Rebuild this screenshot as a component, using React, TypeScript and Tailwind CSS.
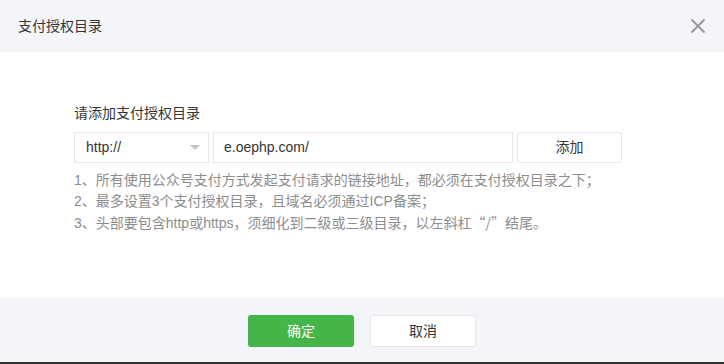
export default function App() {
  const notes = [
    '1、所有使用公众号支付方式发起支付请求的链接地址，都必须在支付授权目录之下；',
    '2、最多设置3个支付授权目录，且域名必须通过ICP备案；',
  ]
  return (
    <div className="w-[724px] h-[364px] flex flex-col bg-white text-[#353535] font-['Liberation_Sans','Noto_Sans_CJK_SC',sans-serif] [text-spacing-trim:space-all]">
      <div className="h-[52px] shrink-0 bg-[#f4f5f9] flex items-center justify-between pl-[18px] pr-[18px]">
        <span className="text-[14px]">支付授权目录</span>
        <svg width="16" height="16" viewBox="0 0 16 16" className="text-[#999]">
          <path d="M1.5 1.5 L14.5 14.5 M14.5 1.5 L1.5 14.5" stroke="currentColor" strokeWidth="2" />
        </svg>
      </div>
      <div className="flex-1 pl-[74px] pt-[50px]">
        <div className="text-[14px] leading-[22px]">请添加支付授权目录</div>
        <div className="flex gap-[4px] mt-[8px] h-[31px]">
          <div className="w-[135px] border border-[#e7e7eb] flex items-center justify-between pl-[11px] pr-[8px] text-[14px]">
            <span>http://</span>
            <span className="w-0 h-0 border-l-[5px] border-r-[5px] border-t-[5px] border-l-transparent border-r-transparent border-t-[#c4c4c4]" />
          </div>
          <div className="w-[300px] border border-[#e7e7eb] flex items-center pl-[10px] text-[14px]">e.oephp.com/</div>
          <div className="w-[105px] border border-[#e7e7eb] rounded-[3px] flex items-center justify-center text-[14px]">添加</div>
        </div>
        <div className="mt-[7px] text-[14px] leading-[21px] text-[#8d8d8d]">
          {notes.map(n => (
            <div key={n}>{n}</div>
          ))}
          <div>
            3、头部要包含http或https，须细化到二级或三级目录，以左斜杠
            <span className="font-['Noto_Sans_CJK_SC',sans-serif]">“/”</span>
            结尾。
          </div>
        </div>
      </div>
      <div className="h-[66px] shrink-0 bg-[#f4f5f9] flex justify-center items-start pt-[17px] gap-[16px] border-b-[2px] border-[#333]">
        <div className="w-[106px] h-[32px] rounded-[3px] bg-[#44b549] text-white text-[14px] flex items-center justify-center">确定</div>
        <div className="w-[106px] h-[32px] rounded-[3px] bg-white border border-[#e4e8eb] text-[14px] flex items-center justify-center">取消</div>
      </div>
    </div>
  )
}
